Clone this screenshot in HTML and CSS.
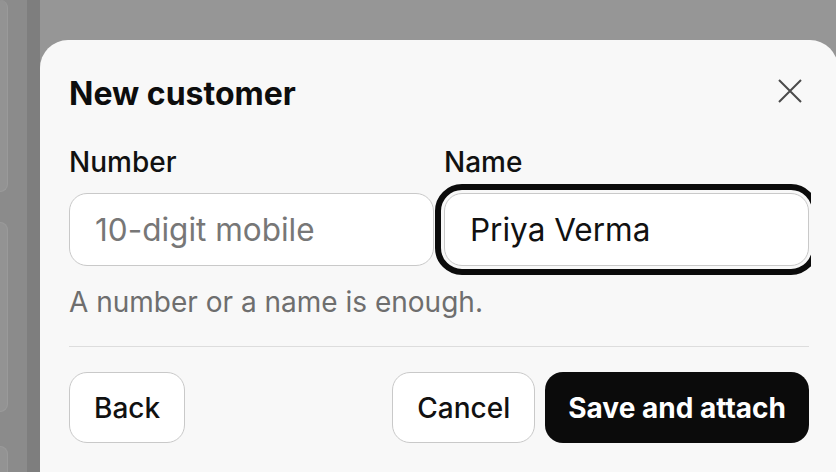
FILE: index.html
```html
<!DOCTYPE html>
<html lang="en">
<head>
<meta charset="utf-8">
<title>New customer</title>
<link rel="stylesheet" href="styles.css">
</head>
<body>
<div class="page">
  <aside class="behind">
    <div class="behind-cards">
      <div class="behind-card card-a"></div>
      <div class="behind-card card-b"></div>
      <div class="behind-card card-c"></div>
    </div>
    <div class="behind-edge"></div>
  </aside>
  <main class="stage">
    <section class="sheet" role="dialog" aria-labelledby="sheet-title">
      <header class="sheet-head">
        <h2 id="sheet-title" class="sheet-title">New customer</h2>
        <button class="close-btn" type="button" aria-label="Close">
          <svg width="24" height="24" viewBox="0 0 24 24" fill="none" stroke="currentColor" stroke-width="2" stroke-linecap="butt">
            <path d="M1 1 L23 23 M23 1 L1 23"/>
          </svg>
        </button>
      </header>
      <div class="fields">
        <label class="field">
          <span class="field-label">Number</span>
          <input class="field-input" type="text" placeholder="10-digit mobile">
        </label>
        <label class="field">
          <span class="field-label">Name</span>
          <input class="field-input is-focused" type="text" value="Priya Verma">
        </label>
      </div>
      <p class="hint">A number or a name is enough.</p>
      <hr class="divider">
      <footer class="actions">
        <button class="btn btn-outline" type="button">Back</button>
        <div class="actions-right">
          <button class="btn btn-outline" type="button">Cancel</button>
          <button class="btn btn-solid" type="button">Save and attach</button>
        </div>
      </footer>
    </section>
  </main>
</div>
</body>
</html>
```

FILE: styles.css
```css
* { box-sizing: border-box; }

html, body {
  margin: 0;
  height: 100%;
}

body {
  background: #969696;
  font-family: Inter, "Noto Sans", "Liberation Sans", sans-serif;
  color: #0d0d0d;
  overflow: hidden;
}

.page {
  display: flex;
  height: 472px;
  width: 836px;
}

.behind {
  width: 40px;
  flex: none;
  display: flex;
  background: #8b8b8b;
}

.behind-cards {
  width: 27px;
  display: flex;
  flex-direction: column;
}

.behind-card {
  width: 8px;
  flex: none;
  background: #939393;
  border: 1px solid #9a9a9a;
  border-left: none;
  border-radius: 0 9px 9px 0;
}

.card-a { height: 192px; border-top: none; }
.card-b { height: 190px; margin-top: 30px; }
.card-c { height: 60px; margin-top: 34px; }

.behind-edge {
  width: 13px;
  background: #7e7e7e;
}

.stage {
  flex: 1;
  min-width: 0;
}

.sheet {
  margin-top: 40px;
  width: 798px;
  height: 440px;
  background: #f8f8f8;
  border-radius: 28px 28px 0 0;
  padding: 35px 29px 0 29px;
}

.sheet-head {
  display: flex;
  justify-content: space-between;
  align-items: flex-start;
  height: 38px;
}

.sheet-title {
  margin: 0;
  font-size: 32px;
  font-weight: 700;
  line-height: 38px;
  color: #0d0d0d;
}

.close-btn {
  border: none;
  background: none;
  padding: 0;
  margin: 4px 7px 0 0;
  width: 24px;
  height: 24px;
  color: #4a4a4a;
  display: flex;
}

.fields {
  display: grid;
  grid-template-columns: 365px 365px;
  column-gap: 10px;
  margin: 0 -2px 0 0;
  padding: 32px 2px 19px 0;
  overflow: hidden;
}

.field {
  display: flex;
  flex-direction: column;
}

.field-label {
  font-size: 28px;
  font-weight: 500;
  line-height: 34px;
  color: #111;
  margin-bottom: 14px;
}

.field-input {
  height: 73px;
  border: 1px solid #c9c9c9;
  border-radius: 18px;
  background: #fff;
  padding: 0 25px;
  font-family: inherit;
  font-size: 31.5px;
  color: #111;
  outline: none;
}

.field-input::placeholder {
  color: #777;
}

.field-input.is-focused {
  outline: 6px solid #0b0b0b;
  outline-offset: 3px;
}

.hint {
  margin: 0;
  font-size: 28px;
  line-height: 34px;
  color: #6e6e6e;
}

.divider {
  border: none;
  border-top: 1.5px solid #dddddd;
  margin: 27px 0 25px;
}

.actions {
  display: flex;
  justify-content: space-between;
  align-items: center;
}

.actions-right {
  display: flex;
  gap: 10px;
}

.btn {
  height: 71px;
  border-radius: 18px;
  padding: 0 24px;
  font-family: inherit;
  font-size: 28px;
  font-weight: 500;
  line-height: 1;
}

.btn-outline {
  background: #fff;
  border: 1.5px solid #c9c9c9;
  color: #111;
}

.btn-solid {
  background: #0b0b0b;
  border: none;
  color: #fff;
  font-weight: 700;
  padding: 0 23px;
}
```
